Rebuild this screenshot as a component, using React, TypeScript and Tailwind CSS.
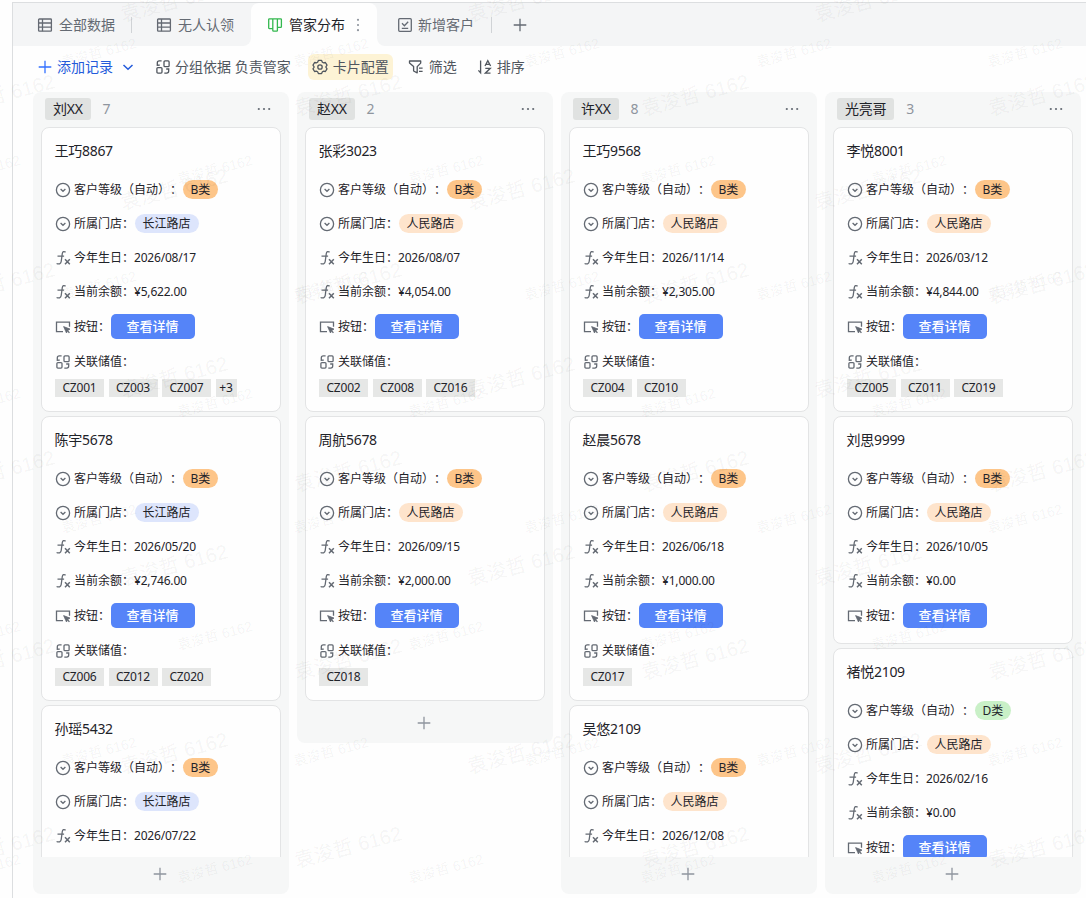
import type { ReactNode } from 'react';
import clsx from 'clsx';

interface CustomerRecord {
  name: string;
  level: 'B类' | 'D类';
  store: string;
  birthday: string;
  balance?: string;
  links?: string[];
  more?: number;
}

interface Group {
  owner: string;
  count: number;
  records: CustomerRecord[];
}

const groups: Group[] = [
  {
    owner: '刘XX',
    count: 7,
    records: [
      { name: '王巧8867', level: 'B类', store: '长江路店', birthday: '2026/08/17', balance: '¥5,622.00', links: ['CZ001', 'CZ003', 'CZ007'], more: 3 },
      { name: '陈宇5678', level: 'B类', store: '长江路店', birthday: '2026/05/20', balance: '¥2,746.00', links: ['CZ006', 'CZ012', 'CZ020'] },
      { name: '孙瑶5432', level: 'B类', store: '长江路店', birthday: '2026/07/22' },
    ],
  },
  {
    owner: '赵XX',
    count: 2,
    records: [
      { name: '张彩3023', level: 'B类', store: '人民路店', birthday: '2026/08/07', balance: '¥4,054.00', links: ['CZ002', 'CZ008', 'CZ016'] },
      { name: '周航5678', level: 'B类', store: '人民路店', birthday: '2026/09/15', balance: '¥2,000.00', links: ['CZ018'] },
    ],
  },
  {
    owner: '许XX',
    count: 8,
    records: [
      { name: '王巧9568', level: 'B类', store: '人民路店', birthday: '2026/11/14', balance: '¥2,305.00', links: ['CZ004', 'CZ010'] },
      { name: '赵晨5678', level: 'B类', store: '人民路店', birthday: '2026/06/18', balance: '¥1,000.00', links: ['CZ017'] },
      { name: '吴悠2109', level: 'B类', store: '人民路店', birthday: '2026/12/08' },
    ],
  },
  {
    owner: '光亮哥',
    count: 3,
    records: [
      { name: '李悦8001', level: 'B类', store: '人民路店', birthday: '2026/03/12', balance: '¥4,844.00', links: ['CZ005', 'CZ011', 'CZ019'] },
      { name: '刘思9999', level: 'B类', store: '人民路店', birthday: '2026/10/05', balance: '¥0.00' },
      { name: '褚悦2109', level: 'D类', store: '人民路店', birthday: '2026/02/16', balance: '¥0.00' },
    ],
  },
];

// Shared wrapper for the 16px stroke icons
function Icon({ children, className }: { children: ReactNode; className?: string }) {
  return (
    <svg
      viewBox="0 0 16 16"
      fill="none"
      stroke="currentColor"
      strokeWidth="1.3"
      className={clsx('h-4 w-4 shrink-0', className)}
    >
      {children}
    </svg>
  );
}

function GridIcon() {
  return (
    <Icon>
      <rect x="1.6" y="2" width="12.8" height="12.2" rx="0.8" />
      <path d="M5.5 2v12.2M1.6 6h12.8M1.6 10.1h12.8" />
    </Icon>
  );
}

function KanbanIcon() {
  return (
    <Icon className="text-[#34b84f]">
      <path d="M2.4 1.8h11.3c.4 0 .7.3.7.7v7.2c0 .4-.3.7-.7.7h-3.3V1.8M5.8 1.8v9.8H2.4c-.4 0-.7-.3-.7-.7V2.5c0-.4.3-.7.7-.7M5.8 11.2v2.2c0 .4.3.7.7.7h3.2c.4 0 .7-.3.7-.7v-3.6" />
    </Icon>
  );
}

function FormIcon() {
  return (
    <Icon>
      <rect x="1.7" y="1.7" width="12.6" height="12.6" rx="1" />
      <path d="M5 6.3l2.4 2.4 3.8-4M4.8 11.4h6.4" />
    </Icon>
  );
}

function PlusIcon({ className }: { className?: string }) {
  return (
    <Icon className={className}>
      <path d="M8 1.7v12.6M1.7 8h12.6" />
    </Icon>
  );
}

function LinkIcon() {
  return (
    <Icon>
      <path d="M6.6 1.9H4.3c-1.2 0-2 .8-2 2v2.3l2.5-.1" />
      <rect x="9" y="1.9" width="5.1" height="5.8" rx="1" />
      <rect x="1.9" y="8.6" width="5.1" height="5.5" rx="1" />
      <path d="M9.3 14.1h2.4c1.2 0 2-.8 2-2V9.9l-2.5.1" />
    </Icon>
  );
}

function GearIcon() {
  return (
    <Icon>
      <path
        d="M6.4 1.4h3.2l.8 1.8 1 .6 2-.3 1.6 2.7L13.8 8l1.2 1.8-1.6 2.7-2-.3-1 .6-.8 1.8H6.4l-.8-1.8-1-.6-2 .3L1 9.8 2.2 8 1 6.2l1.6-2.7 2 .3 1-.6z"
        strokeLinejoin="round"
      />
      <circle cx="8" cy="8" r="2.2" />
    </Icon>
  );
}

function FilterIcon() {
  return (
    <Icon>
      <path d="M1.5 2h11.2v2.1L9.2 7.6v6.2L5.6 12V7.6L1.5 4.1z" strokeLinejoin="round" />
      <path d="M11 9.2h3.6M11 12.4h3.6" />
    </Icon>
  );
}

function SortIcon() {
  return (
    <Icon>
      <path d="M3.6 1.5v12.3L1.4 11.4" />
      <path d="M8 7l2.8-5.4L13.6 7M9 5.3h3.6M8.3 9.3h5l-5 4.9h5.2" />
    </Icon>
  );
}

function SelectIcon() {
  return (
    <Icon>
      <circle cx="8" cy="8" r="6.6" />
      <path d="M5.6 7L8 9.3 10.4 7" />
    </Icon>
  );
}

function FormulaIcon() {
  return (
    <Icon>
      <path d="M10.6 2.3C9.2.9 7.6 1.6 7.3 3.5l-1.1 8c-.3 2.4-2.4 3-4.6 2M2.5 6.2h6.6" />
      <path d="M10 9.3l4.8 5M14.8 9.3l-4.8 5" strokeWidth="1.5" />
    </Icon>
  );
}

function ButtonIcon() {
  return (
    <Icon>
      <path d="M8 12.6H1.5V3.2h13v4.6" />
      <path d="M8.6 7.6l6.4 2.5-2.3 1.3-1.2 2.6z" fill="currentColor" strokeWidth="0.8" />
      <path d="M12.3 11.3l2.1 2.5" />
    </Icon>
  );
}

function MoreIcon() {
  return (
    <svg viewBox="0 0 16 16" fill="currentColor" className="h-4 w-4">
      <circle cx="2.8" cy="8" r="1.1" />
      <circle cx="8" cy="8" r="1.1" />
      <circle cx="13.2" cy="8" r="1.1" />
    </svg>
  );
}

function Field({ icon, label, className, children }: { icon: ReactNode; label: string; className?: string; children?: ReactNode }) {
  return (
    <div className={clsx('flex items-center', className ?? 'h-[34px]')}>
      <span className="mr-[3.5px] ml-[0.5px] flex text-[#646a73]">{icon}</span>
      <span className="whitespace-nowrap [text-spacing-trim:space-all]">{label}：</span>
      {children}
    </div>
  );
}

function Pill({ className, children }: { className: string; children: ReactNode }) {
  return <span className={clsx('mb-px ml-[0.5px] flex h-[19px] items-center rounded-full px-2 whitespace-nowrap', className)}>{children}</span>;
}

function RecordCard({ record }: { record: CustomerRecord }) {
  return (
    <div
      className={clsx(
        'shrink-0 rounded-lg border border-[#e3e4e5] bg-[#fefefe] px-3 pt-[13px] text-xs text-[#1f2329]',
        record.links ? 'pb-[14px]' : 'pb-2'
      )}
    >
      <div className="mb-3 ml-[0.5px] h-5 text-sm leading-5 tracking-[-0.02em]">{record.name}</div>
      <Field icon={<SelectIcon />} label="客户等级（自动）">
        <Pill className={record.level === 'B类' ? 'bg-[#fdc589]' : 'bg-[#c9f0c7]'}>{record.level}</Pill>
      </Field>
      <Field icon={<SelectIcon />} label="所属门店">
        <Pill className={record.store === '长江路店' ? 'bg-[#dde5fc]' : 'bg-[#fee4cc]'}>{record.store}</Pill>
      </Field>
      <Field icon={<FormulaIcon />} label="今年生日">
        <span className="tracking-[-0.2px]">{record.birthday}</span>
      </Field>
      <Field icon={<FormulaIcon />} label="当前余额">
        <span className="tracking-[-0.2px]">{record.balance}</span>
      </Field>
      <Field icon={<ButtonIcon />} label="按钮" className="h-9">
        <button className="mb-[2px] ml-[0.5px] h-[25px] w-[84px] rounded-[5px] bg-[#5584f8] pb-px text-[13px] leading-6 font-medium text-white">
          查看详情
        </button>
      </Field>
      {record.links ? (
        <>
          <Field icon={<LinkIcon />} label="关联储值" className="mt-[2px] h-[30px]" />
          <div className="mt-[2px] ml-px flex h-[18px] gap-[4.5px] leading-[18px] tracking-[-0.2px]">
            {record.links.map((link) => (
              <span key={link} className="w-[49px] bg-[#e6e7e6] text-center">{link}</span>
            ))}
            {record.more && <span className="w-[21px] bg-[#e6e7e6] text-center">+{record.more}</span>}
          </div>
        </>
      ) : (
        <div className="h-px" />
      )}
    </div>
  );
}

function GroupColumn({ group }: { group: Group }) {
  return (
    <section className="flex max-h-[802px] w-64 shrink-0 flex-col rounded-lg bg-[#f6f7f7] px-2">
      <header className="flex h-[35px] shrink-0 items-center pr-[9px] pb-[2px] pl-1 text-sm">
        <span className="flex h-[22px] items-center rounded-[3px] bg-[#e0e2e1] px-2 tracking-[-0.02em] text-[#1f2329]">{group.owner}</span>
        <span className="ml-[12px] text-[#8f959e]">{group.count}</span>
        <span className="ml-auto text-[#646a73]"><MoreIcon /></span>
      </header>
      <div className="flex min-h-0 flex-col gap-1 overflow-hidden pb-[5px]">
        {group.records.map((record) => (
          <RecordCard key={record.name} record={record} />
        ))}
      </div>
      <footer className="flex h-[37px] shrink-0 items-center justify-center pr-[2px] pb-1 text-[#8f959e]">
        <PlusIcon className="h-3.5 w-3.5" />
      </footer>
    </section>
  );
}

function TabBar() {
  return (
    <nav className="flex h-[43px] text-sm text-[#646a73]">
      <div className="flex w-[238px] shrink-0 items-center rounded-br-lg bg-[#f4f5f6] pl-6">
        <GridIcon />
        <span className="ml-[6px]">全部数据</span>
        <span className="ml-4 h-4 w-px bg-[#d0d3d6]" />
        <span className="ml-6 flex"><GridIcon /></span>
        <span className="ml-[6px]">无人认领</span>
      </div>
      <div className="flex w-[126px] shrink-0 bg-[#f4f5f6]">
        <div className="flex w-full items-center rounded-t-lg bg-[#fefefe] pl-4 text-[#1f2329]">
          <KanbanIcon />
          <span className="ml-[6px]">管家分布</span>
          <span className="ml-[5px] flex rotate-90 text-[#8f959e]"><MoreIcon /></span>
        </div>
      </div>
      <div className="flex flex-1 items-center rounded-bl-lg bg-[#f4f5f6] pl-5">
        <FormIcon />
        <span className="ml-[5px]">新增客户</span>
        <span className="ml-[17px] h-4 w-px bg-[#d0d3d6]" />
        <PlusIcon className="ml-5" />
      </div>
    </nav>
  );
}

function Toolbar() {
  return (
    <div className="flex h-[42px] items-center pl-6 text-sm text-[#50565e]">
      <PlusIcon className="text-[#3370ff]" />
      <span className="ml-[4px] text-[#245bdb]">添加记录</span>
      <Icon className="ml-[7px] text-[#245bdb]">
        <path d="M3.5 6l4.5 4.3L12.5 6" strokeWidth="1.5" />
      </Icon>
      <span className="ml-[19px] flex"><LinkIcon /></span>
      <span className="ml-1">分组依据 负责管家</span>
      <span className="ml-[17.5px] flex h-[26px] items-center rounded-md bg-[#fdf3d5] px-1">
        <GearIcon />
        <span className="ml-[4.5px]">卡片配置</span>
      </span>
      <span className="ml-[15px] flex"><FilterIcon /></span>
      <span className="ml-[5px]">筛选</span>
      <span className="ml-[20px] flex"><SortIcon /></span>
      <span className="ml-[4px]">排序</span>
    </div>
  );
}

// Two staggered watermark grids, each mark placed by its centre
const marks = [
  { x0: 99, y0: 53, dx: 231.5, dy: 116.5, rows: 8, cols: 6, className: 'text-[14px]' },
  { x0: 174, y0: 1, dx: 347, dy: 94, rows: 10, cols: 5, className: 'text-[20px]' },
].flatMap((grid) =>
  Array.from({ length: grid.rows * grid.cols }, (_, i) => {
    const row = Math.floor(i / grid.cols);
    const col = (i % grid.cols) - 1;
    const shift = row % 2 === 1 ? grid.dx / 2 : 0;
    return { left: grid.x0 + col * grid.dx + shift, top: grid.y0 + row * grid.dy, className: grid.className };
  })
).filter((mark) => mark.left > -60 && mark.left < 1146);

function Watermark() {
  return (
    <div className="pointer-events-none absolute inset-0 overflow-hidden text-black/[0.055]" aria-hidden="true">
      {marks.map((mark, i) => (
        <span
          key={i}
          className={clsx("absolute -translate-x-1/2 -translate-y-1/2 -rotate-[15deg] font-['Liberation_Sans','Noto_Sans_CJK_SC',sans-serif] whitespace-nowrap", mark.className)}
          style={{ left: mark.left, top: mark.top }}
        >
          袁浚哲 6162
        </span>
      ))}
    </div>
  );
}

export default function App() {
  return (
    <div className="relative h-[898px] w-[1086px] overflow-hidden bg-[#fefefe] pt-[2px] font-['Noto_Sans','Noto_Sans_CJK_SC',sans-serif]">
      <div className="ml-3 h-full border-t border-l border-[#dcdee0]">
        <TabBar />
        <Toolbar />
        <main className="mt-[4px] ml-5 flex items-start gap-2">
          {groups.map((group) => (
            <GroupColumn key={group.owner} group={group} />
          ))}
        </main>
      </div>
      <Watermark />
    </div>
  );
}
